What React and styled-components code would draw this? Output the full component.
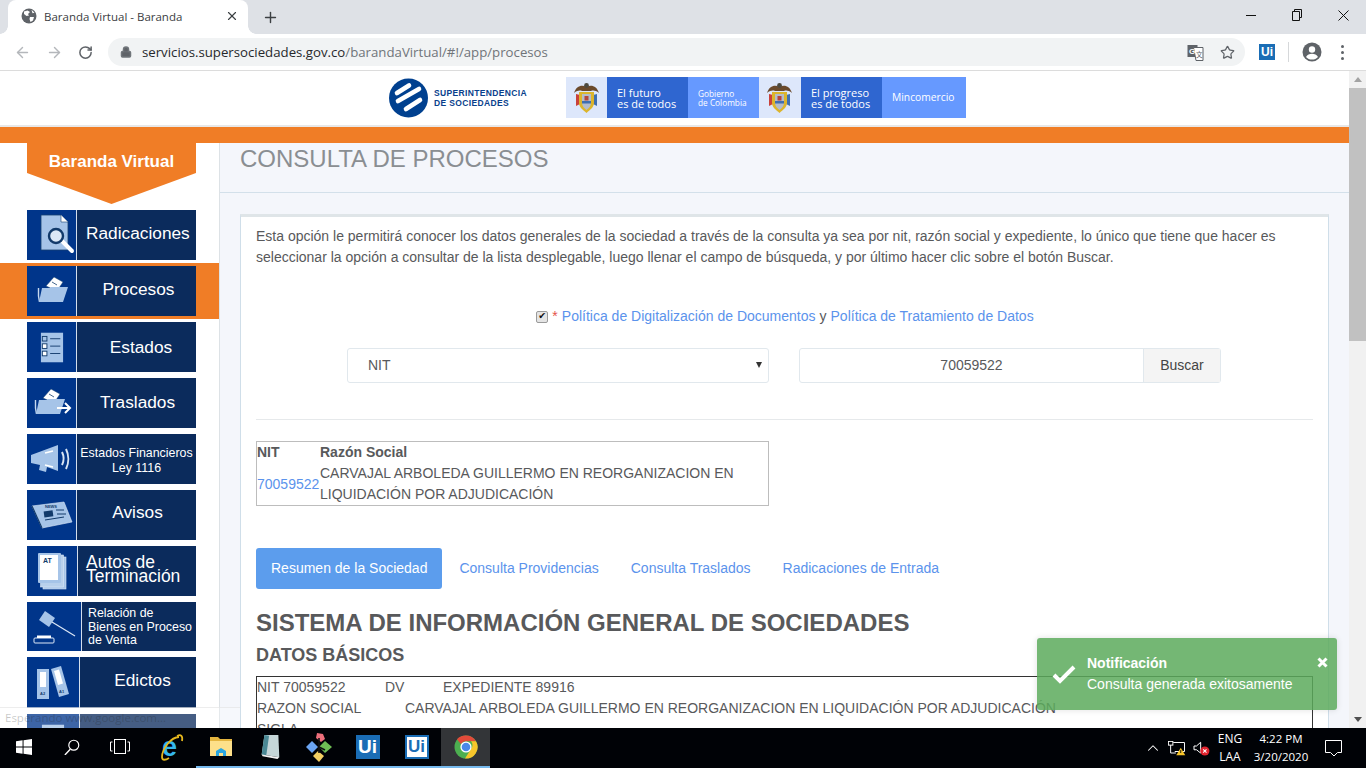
import React from "react";
import styled, { createGlobalStyle } from "styled-components";
import { ArrowLeft, ArrowRight, RotateCw, Lock, Star, X, Plus, ChevronUp } from "lucide-react";

const GlobalStyle = createGlobalStyle`
  html, body {
    margin: 0;
    padding: 0;
    width: 1366px;
    height: 768px;
    overflow: hidden;
    background: #fff;
  }
  * { box-sizing: border-box; }
`;

const Screen = styled.div`
  position: relative;
  width: 1366px;
  height: 768px;
  display: flex;
  flex-direction: column;
  overflow: hidden;
  font-family: "Liberation Sans", Arial, sans-serif;
`;

// ================ Browser chrome ===================
const TabStrip = styled.div`
  height: 34px;
  flex: none;
  background: #dee1e6;
  display: flex;
  align-items: stretch;
  padding-left: 8px;
`;

const Tab = styled.div`
  position: relative;
  width: 240px;
  background: #fff;
  border-radius: 8px 8px 0 0;
  display: flex;
  align-items: center;
  padding: 0 9px 2px 13px;
  color: #3c4043;
  font-family: "Open Sans", sans-serif;
  font-size: 11.5px;
  &::before, &::after {
    content: "";
    position: absolute;
    bottom: 0;
    width: 8px;
    height: 8px;
  }
  &::before {
    left: -8px;
    background: radial-gradient(circle at 0 0, #dee1e6 7.5px, #fff 8px);
  }
  &::after {
    right: -8px;
    background: radial-gradient(circle at 100% 0, #dee1e6 7.5px, #fff 8px);
  }
`;

const TabTitle = styled.span`
  flex: 1;
  margin-left: 7px;
  white-space: nowrap;
`;

const NewTab = styled.div`
  margin-left: 14px;
  display: flex;
  align-items: center;
  color: #3c4043;
`;

const WindowControls = styled.div`
  margin-left: auto;
  display: flex;
  align-items: stretch;
`;

const WindowButton = styled.div`
  width: 46px;
  display: flex;
  align-items: center;
  justify-content: center;
  padding-bottom: 4px;
`;

const Toolbar = styled.div`
  height: 37px;
  flex: none;
  background: #fff;
  border-bottom: 1px solid #dcdcdc;
  display: flex;
  align-items: center;
  padding: 0 0 0 14px;
`;

const NavButton = styled.div`
  width: 32px;
  display: flex;
  align-items: center;
  color: ${(props) => (props.$off ? "#b4b7bb" : "#5f6368")};
`;

const Omnibox = styled.div`
  width: 1137px;
  height: 28px;
  margin-left: -2px;
  border-radius: 14px;
  background: #f1f3f4;
  display: flex;
  align-items: center;
  padding: 0 10px 0 12px;
  font-family: "Open Sans", sans-serif;
  font-size: 13.23px;
  color: #70757a;
  white-space: nowrap;
`;

const UrlHost = styled.span`
  margin-left: 10px;
  color: #26282b;
`;

const OmniIcons = styled.div`
  margin-left: auto;
  display: flex;
  align-items: center;
  gap: 16px;
  color: #5f6368;
`;

const ToolIcons = styled.div`
  display: flex;
  align-items: center;
  margin-left: 14px;
`;

const UiBadge = styled.div`
  width: ${(props) => props.$size}px;
  height: ${(props) => props.$size}px;
  display: flex;
  align-items: center;
  justify-content: center;
  font-family: "Liberation Sans", sans-serif;
  font-weight: 700;
  background: ${(props) => (props.$light ? "#fff" : "#1a6db5")};
  color: ${(props) => (props.$light ? "#1a6db5" : "#fff")};
  border: ${(props) => (props.$light ? "2px solid #1a6db5" : "none")};
  font-size: ${(props) => props.$font}px;
`;

const ToolDivider = styled.div`
  width: 1px;
  height: 20px;
  margin: 0 13px;
  background: #d6d8da;
`;

const Kebab = styled.div`
  margin-left: 19px;
  display: flex;
  flex-direction: column;
  gap: 3px;
  i {
    display: block;
    width: 3px;
    height: 3px;
    border-radius: 50%;
    background: #5f6368;
  }
`;

// ================ Viewport ===================
const Viewport = styled.div`
  flex: 1;
  min-height: 0;
  display: flex;
`;

const Page = styled.div`
  flex: 1;
  min-width: 0;
  display: flex;
  flex-direction: column;
  overflow: hidden;
`;

const Scrollbar = styled.div`
  width: 17px;
  flex: none;
  background: #f1f1f1;
  display: flex;
  flex-direction: column;
  align-items: center;
`;

const ScrollArrow = styled.div`
  width: 0;
  height: 0;
  flex: none;
  margin: 6px 0;
  border-left: 4px solid transparent;
  border-right: 4px solid transparent;
  ${(props) =>
    props.$down
      ? "border-top: 5px solid #505050; margin-top: auto;"
      : "border-bottom: 5px solid #a3a3a3;"}
`;

const ScrollThumb = styled.div`
  width: 100%;
  height: 253px;
  background: #c1c1c1;
`;

const Header = styled.header`
  height: 56px;
  flex: none;
  background: #fff;
  border-bottom: 2px solid #e8e8e8;
  display: flex;
  align-items: center;
  padding: 0 0 0 389px;
`;

const Logo = styled.div`
  display: flex;
  align-items: center;
  width: 177px;
  margin-top: -1px;
`;

const LogoText = styled.div`
  margin-left: 5px;
  color: #0a3f8c;
  font-size: 8.5px;
  font-weight: 700;
  line-height: 10px;
  letter-spacing: 0.35px;
`;

const Banner = styled.div`
  display: flex;
  height: 41px;
  margin-top: -1px;
`;

const BannerCell = styled.div`
  width: ${(props) => props.$w}px;
  background: ${(props) => props.$bg};
  color: #fff;
  font-size: ${(props) => props.$font || 11}px;
  line-height: ${(props) => props.$line || 11}px;
  display: flex;
  align-items: center;
  padding-left: ${(props) => props.$pad || 0}px;
  font-family: "Open Sans", sans-serif;
  font-weight: 500;
`;

const OrangeBar = styled.div`
  height: 16px;
  flex: none;
  background: #f07d26;
`;

const Body = styled.div`
  flex: 1;
  min-height: 0;
  display: flex;
  overflow: hidden;
`;

// ================ Sidebar ===================
const Sidebar = styled.aside`
  width: 220px;
  flex: none;
  background: #fff;
  border-right: 1px solid #dde2e6;
  overflow: hidden;
`;

const Flag = styled.div`
  width: 169px;
  height: 61px;
  margin-left: 27px;
  background: #f07d26;
  clip-path: polygon(0 0, 100% 0, 100% 49%, 50% 100%, 0 49%);
  color: #fff;
  font-size: 17px;
  font-weight: 700;
  text-align: center;
  padding-top: 9px;
`;

const MenuList = styled.nav`
  margin-top: 6px;
  display: flex;
  flex-direction: column;
  gap: 6px;
`;

const MenuRow = styled.div`
  flex: none;
  padding: ${(props) => (props.$active ? "3px 0 3px 27px" : "0 0 0 27px")};
  margin: ${(props) => (props.$active ? "-3px 0" : "0")};
  background: ${(props) => (props.$active ? "#f07d26" : "transparent")};
`;

const MenuItem = styled.div`
  width: 169px;
  height: ${(props) => props.$h || 50}px;
  display: flex;
  background: #0b2b5c;
  color: #fff;
`;

const MenuIcon = styled.div`
  width: ${(props) => props.$w || 50}px;
  flex: none;
  background: #00358a;
  border-right: 1px solid #d3deec;
  display: flex;
  align-items: center;
  justify-content: center;
`;

const MenuLabel = styled.div`
  flex: 1;
  display: flex;
  align-items: center;
  justify-content: ${(props) => (props.$left ? "flex-start" : "center")};
  padding-left: ${(props) => props.$shift || 0}px;
  padding-top: ${(props) => props.$drop || 0}px;
  padding-bottom: ${(props) => props.$lift ?? 3}px;
  font-size: ${(props) => props.$font || 17.3}px;
  line-height: ${(props) => props.$line || "20px"};
  text-align: ${(props) => (props.$left ? "left" : "center")};
`;

// ================ Main ===================
const Main = styled.main`
  flex: 1;
  min-width: 0;
  background: #f4f6fb;
  overflow: hidden;
`;

const PageHead = styled.div`
  height: 50px;
  padding: 3px 0 0 20px;
  border-bottom: 1px solid #d3e0ea;
`;

const PageTitle = styled.h2`
  margin: 0;
  font-size: 24px;
  line-height: 26px;
  font-weight: 400;
  color: #8a8e92;
`;

const Content = styled.div`
  padding: 21px 20px 0;
`;

const Card = styled.section`
  height: 600px;
  background: #fff;
  border: 1px solid #cfdee9;
  border-top: 3px solid #dfe5e8;
  padding: 9px 15px 0;
  color: #58595b;
  font-size: 14px;
  line-height: 21px;
`;

const Intro = styled.p`
  margin: 0;
  width: 1040px;
`;

const PolicyRow = styled.div`
  margin-top: 38px;
  display: flex;
  justify-content: center;
  align-items: center;
  height: 21px;
`;

const PolicyCheck = styled.input`
  appearance: none;
  position: relative;
  margin: 0 4px 0 1px;
  width: 12px;
  height: 12px;
  background: #e4e4e4;
  border: 1px solid #9a9a9a;
  border-radius: 2px;
  &::after {
    content: "✔";
    position: absolute;
    left: 1px;
    top: -2px;
    line-height: 12px;
    font-family: "DejaVu Sans", sans-serif;
    font-size: 9.5px;
    color: #111;
  }
`;

const Required = styled.span`
  color: #e5534b;
  margin-right: 4px;
`;

const Link = styled.a`
  color: #5b93ec;
`;

const PolicyGlue = styled.span`
  margin: 0 4px;
`;

const FormRow = styled.div`
  margin-top: 21px;
  padding-right: 1px;
  display: flex;
  justify-content: center;
  gap: 30px;
`;

const SelectBox = styled.div`
  width: 422px;
  height: 35px;
  border: 1px solid #e1e8ed;
  border-radius: 3px;
  display: flex;
  align-items: center;
  justify-content: space-between;
  padding: 0 6px 0 20px;
  color: #58595b;
`;

const Caret = styled.span`
  width: 0;
  height: 0;
  margin-top: -2px;
  border-left: 3px solid transparent;
  border-right: 3px solid transparent;
  border-top: 6px solid #333;
`;

const SearchGroup = styled.div`
  width: 422px;
  height: 35px;
  display: flex;
  border: 1px solid #e1e8ed;
  border-radius: 3px;
`;

const SearchValue = styled.div`
  flex: 1;
  display: flex;
  align-items: center;
  justify-content: center;
  color: #58595b;
`;

const SearchButton = styled.div`
  width: 77px;
  flex: none;
  background: #f4f4f4;
  border-left: 1px solid #e1e8ed;
  display: flex;
  align-items: center;
  justify-content: center;
  color: #444;
`;

const Hr = styled.hr`
  margin: 36px 0 21px;
  border: none;
  height: 1px;
  background: #e6e9eb;
`;

const ResultTable = styled.table`
  width: 513px;
  border: 1px solid #bdbdbd;
  border-spacing: 0;
  th, td {
    padding: 0;
    text-align: left;
    font-size: 14px;
    line-height: 21px;
  }
  th { font-weight: 700; }
  th:first-child, td:first-child { width: 63px; }
  td { vertical-align: middle; }
`;

const Tabs = styled.div`
  margin-top: 42px;
  display: flex;
  align-items: center;
`;

const TabButton = styled.div`
  height: 41px;
  padding: 0 ${(props) => (props.$active ? "15px" : "16px")};
  display: flex;
  align-items: center;
  border-radius: 3px;
  margin-right: ${(props) => (props.$active ? "1px" : "0")};
  background: ${(props) => (props.$active ? "#5c9ded" : "transparent")};
  color: ${(props) => (props.$active ? "#fff" : "#5b93ec")};
`;

const BigTitle = styled.h1`
  margin: 21px 0 0;
  font-size: 24px;
  line-height: 26px;
  font-weight: 700;
  color: #58595b;
`;

const SubTitle = styled.h3`
  margin: 8px 0 0;
  font-size: 18px;
  line-height: 22px;
  font-weight: 700;
  color: #58595b;
`;

const DataTable = styled.div`
  margin-top: 10px;
  width: 1057px;
  border: 1px solid #333;
  border-bottom: none;
`;

const DataRow = styled.div`
  display: flex;
  height: 21px;
  white-space: nowrap;
`;

const DataCell = styled.div`
  width: ${(props) => (props.$w ? `${props.$w}px` : "auto")};
  flex: none;
`;

// ================ Overlays ===================
const StatusBubble = styled.div`
  position: absolute;
  left: 0;
  bottom: 40px;
  width: 240px;
  height: 21px;
  padding: 1px 0 0 5px;
  background: rgba(255, 255, 255, 0.24);
  border-top: 1px solid rgba(225, 225, 225, 0.6);
  color: rgba(30, 30, 30, 0.25);
  font-family: "Open Sans", sans-serif;
  font-size: 11.5px;
  line-height: 18px;
`;

const Toast = styled.div`
  position: absolute;
  left: 1037px;
  top: 638px;
  width: 300px;
  height: 72px;
  border-radius: 3px;
  background: rgba(92, 170, 92, 0.85);
  color: #fff;
  display: flex;
  align-items: center;
  padding: 0 0 0 15px;
  box-shadow: 0 0 6px rgba(0, 0, 0, 0.12);
  font-size: 14px;
  line-height: 21px;
`;

const ToastText = styled.div`
  margin-left: 11px;
  flex: 1;
`;

const ToastTitle = styled.div`
  font-weight: 700;
`;

const ToastClose = styled.div`
  position: absolute;
  right: 9px;
  top: 19px;
  display: flex;
`;

// ================ Taskbar ===================
const Taskbar = styled.footer`
  height: 40px;
  flex: none;
  background: #000206;
  display: flex;
  align-items: stretch;
  color: #fff;
  font-family: "Open Sans", sans-serif;
  font-size: 12px;
`;

const TaskSlot = styled.div`
  width: ${(props) => props.$w || 49}px;
  flex: none;
  margin-left: ${(props) => props.$gap || 0}px;
  display: flex;
  align-items: center;
  justify-content: center;
  padding-bottom: 1px;
  background: ${(props) => (props.$active ? "#333538" : "transparent")};
  border-bottom: ${(props) =>
    props.$open ? "2px solid #76b9ed" : "2px solid transparent"};
`;

const Tray = styled.div`
  margin-left: auto;
  display: flex;
  align-items: center;
  padding-right: 15px;
`;

const TrayIcon = styled.div`
  width: ${(props) => props.$w}px;
  display: flex;
  justify-content: center;
`;

const TrayText = styled.div`
  width: ${(props) => props.$w}px;
  font-size: ${(props) => props.$font || 12}px;
  text-align: center;
  line-height: 18px;
  white-space: nowrap;
`;

const GlobeIcon = () => (
  <svg width="16" height="16" viewBox="0 0 16 16">
    <circle cx="8" cy="8" r="7.5" fill="#5f6368" />
    <path d="M3 3.5 6.5 2.5 9 4 7 6 8 7.5 5.5 8 3 6Z M9 9h4l-1 3.5L9.5 14 8.5 11Z M10.5 1.8l3 3-2 .5Z" fill="#fff" />
  </svg>
);

const TranslateIcon = () => (
  <svg width="17" height="17" viewBox="0 0 17 17">
    <rect x="0.5" y="1" width="10" height="12" fill="#5f6368" />
    <path d="M6.5 3.5h9.5v13h-7z" fill="#fff" stroke="#5f6368" />
    <text x="2" y="10" fontFamily="Liberation Sans" fontSize="8" fontWeight="700" fill="#fff">G</text>
    <text x="9" y="13" fontFamily="Noto Sans CJK SC" fontSize="6.5" fill="#5f6368">文</text>
  </svg>
);

const AvatarIcon = () => (
  <svg width="20" height="20" viewBox="0 0 20 20">
    <circle cx="10" cy="10" r="9.5" fill="#5f6368" />
    <circle cx="10" cy="7.5" r="3.2" fill="#fff" />
    <path d="M4 15c1.2-2.4 3.5-3.3 6-3.3s4.8.9 6 3.3c-1.4 1.7-3.6 2.6-6 2.6s-4.6-.9-6-2.6z" fill="#fff" />
  </svg>
);

const SocietyLogo = () => (
  <svg width="40" height="40" viewBox="0 0 40 40">
    <circle cx="19.5" cy="20" r="19.5" fill="#00408f" />
    <g stroke="#fff" strokeWidth="4.6" strokeLinecap="round">
      <line x1="8" y1="15" x2="20" y2="7.5" />
      <line x1="9" y1="23" x2="30" y2="11" />
      <line x1="17" y1="31" x2="31" y2="22" />
    </g>
  </svg>
);

const Crest = () => (
  <svg width="27" height="32" viewBox="0 0 27 32">
    <path d="M1 11C3 4 9 2 13.5 5 18 2 24 4 26 11c-3-2.5-6-3-8-2H9C7 8 4 8.5 1 11z" fill="#6b4a2c" />
    <circle cx="13.5" cy="3.5" r="2.4" fill="#4d4a40" />
    <path d="M3 12l4 1v9l-4 2z" fill="#c9413a" />
    <path d="M24 12l-4 1v9l4 2z" fill="#3f6fb0" />
    <path d="M6 10h15v11c0 4-4 7-7.5 10C10 28 6 25 6 21z" fill="#dcb52c" />
    <path d="M9 12h9v9c0 3-2 5-4.5 7C11 26 9 24 9 21z" fill="#b4bccb" />
    <rect x="11.5" y="14" width="4" height="4.5" fill="#b5453c" />
    <path d="M9 19h9v2.5H9z" fill="#3f6fb0" />
  </svg>
);

const FileSearchIcon = () => (
  <svg width="46" height="42" viewBox="-6 0 46 42">
    <path d="M6 1h20l7 7v28H6z" fill="#a6c4e8" stroke="#15406f" strokeWidth="0.8" />
    <path d="M26 1v7h7" fill="#fff" stroke="#15406f" strokeWidth="0.6" />
    <line x1="27" y1="27" x2="37" y2="37" stroke="#fff" strokeWidth="4" strokeLinecap="round" />
    <circle cx="21" cy="22" r="7" fill="#dce8f6" stroke="#123a6a" strokeWidth="2.4" />
  </svg>
);

const FolderIcon = ({ arrow }) => (
  <svg width={arrow ? 40 : 34} height="30" viewBox={`0 0 ${arrow ? 40 : 34} 30`}>
    <path d="M11 10 19 1l9 5-6 9z" fill="#fff" stroke="#15406f" strokeWidth="0.5" />
    <line x1="17" y1="6" x2="22" y2="9" stroke="#15406f" strokeWidth="0.8" />
    <path d="M3.5 12v8l1 6" fill="none" stroke="#c6d8ee" strokeWidth="1.4" />
    <path d="M7 12h8l1-1h17l-5 15H4z" fill="#a6c4e8" />
    {arrow && <path d="M25 20h13M33 15l5 5-5 5" fill="none" stroke="#fff" strokeWidth="2" />}
  </svg>
);

const ChecklistIcon = () => (
  <svg width="24" height="33" viewBox="0 0 26 34">
    <rect x="1" y="1" width="24" height="32" fill="#a6c4e8" />
    {[5, 13, 21].map((y) => (
      <g key={y}>
        <rect x="2.5" y={y} width="5" height="5" fill={y === 5 ? "#a6c4e8" : "#fff"} stroke="#123a6a" />
        <line x1="11" y1={y + 2.5} x2="22" y2={y + 2.5} stroke="#123a6a" strokeWidth="1" />
      </g>
    ))}
  </svg>
);

const MegaphoneIcon = () => (
  <svg width="44" height="30" viewBox="0 0 44 30">
    <path d="M1 11 28 1v26L17 23l-1 5-7-2 1-5-9-2z" fill="#a6c4e8" />
    <path d="M15 9l8-2M15 21l8 2" stroke="#fff" strokeWidth="1.5" />
    <path d="M32 8c2 4 2 9 0 13M36 5c3 6 3 14 0 20" fill="none" stroke="#d8e5f4" strokeWidth="2" />
  </svg>
);

const NewsIcon = () => (
  <svg width="42" height="28" viewBox="0 0 42 28">
    <path d="M1 5 33 1l8 20-30 6z" fill="#a6c4e8" stroke="#dce8f6" strokeWidth="0.6" />
    <path d="M1 5l10 22" stroke="#123a6a" strokeWidth="1.2" />
    <rect x="13" y="10" width="9" height="6" fill="#123a6a" transform="rotate(-8 17 13)" />
    <path d="M25 9h8M26 13h9M14 19l19-3" stroke="#123a6a" strokeWidth="1" />
    <text x="14" y="7" fontFamily="Liberation Sans" fontSize="4" fontWeight="700" fill="#123a6a">NEWS</text>
  </svg>
);

const DocsStackIcon = () => (
  <svg width="30" height="38" viewBox="0 0 30 38">
    <rect x="6" y="5" width="23" height="32" fill="#a6c4e8" stroke="#dce8f6" strokeWidth="0.6" />
    <rect x="3.5" y="3" width="23" height="32" fill="#b8d0ec" stroke="#dce8f6" strokeWidth="0.6" />
    <rect x="1" y="1" width="23" height="30" rx="1" fill="#a6c4e8" />
    <rect x="3" y="3" width="18" height="25" fill="#fff" />
    <text x="6" y="11" fontFamily="Liberation Sans" fontSize="7" fontWeight="700" fill="#123a6a">AT</text>
  </svg>
);

const GavelIcon = () => (
  <svg width="46" height="34" viewBox="0 0 46 34">
    <path d="M14 1l10 7-6 9-10-7z" fill="#a6c4e8" />
    <line x1="21" y1="12" x2="44" y2="26" stroke="#dce8f6" strokeWidth="1.2" />
    <rect x="3" y="28" width="20" height="5" rx="1" fill="none" stroke="#dce8f6" strokeWidth="1" />
    <rect x="6" y="25.5" width="14" height="2.5" fill="#fff" />
  </svg>
);

const BindersIcon = () => (
  <svg width="34" height="34" viewBox="0 0 34 34">
    <rect x="1" y="3" width="12" height="30" fill="#a6c4e8" />
    <rect x="4" y="6" width="6" height="15" fill="#fff" />
    <path d="M15 3l10-3 8 28-10 3z" fill="#a6c4e8" />
    <path d="M18 5l5-1.5 4 14-5 1.5z" fill="#fff" />
    <text x="4" y="29" fontFamily="Liberation Sans" fontSize="4" fontWeight="700" fill="#123a6a">A2</text>
    <text x="23" y="27" fontFamily="Liberation Sans" fontSize="4" fontWeight="700" fill="#123a6a">A1</text>
  </svg>
);

const WindowsLogo = () => (
  <svg width="16" height="16" viewBox="0 0 17 17">
    <path d="M0 2.4 7 1.4V8H0zM8 1.2 17 0v8H8zM0 9h7v6.6l-7-1zM8 9h9v8l-9-1.2z" fill="#fff" />
  </svg>
);

const SearchLogo = () => (
  <svg width="16" height="16" viewBox="0 0 18 18">
    <circle cx="11" cy="7" r="5.6" fill="none" stroke="#fff" strokeWidth="1.3" />
    <line x1="7" y1="11.5" x2="1" y2="18" stroke="#fff" strokeWidth="1.5" />
  </svg>
);

const TaskViewLogo = () => (
  <svg width="20" height="15" viewBox="0 0 20 15">
    <rect x="4.5" y="0.5" width="11" height="14" fill="none" stroke="#fff" />
    <path d="M2.5 3H.5v9h2M17.5 3h2v9h-2" fill="none" stroke="#fff" />
  </svg>
);

const IeLogo = () => (
  <svg width="26" height="32" viewBox="0 0 26 32">
    <text x="3" y="25" fontFamily="Liberation Sans" fontSize="27" fontWeight="700" fill="#35b7ec">e</text>
    <path d="M20 6C12 6 3 18 3 26c0 4 4 3 7 1M18 5c4-2 6 0 5 5" fill="none" stroke="#e5b71e" strokeWidth="1.8" />
  </svg>
);

const FolderLogo = () => (
  <svg width="22" height="19" viewBox="0 0 22 19">
    <path d="M0 0h8l2 2h12v4H0z" fill="#e4b53f" />
    <rect y="4" width="22" height="15" fill="#fde08a" />
    <path d="M6 19v-5l5-3 5 3v5h-3v-3H9v3z" fill="#2aa6e0" />
  </svg>
);

const NotesLogo = () => (
  <svg width="22" height="26" viewBox="0 0 22 28">
    <path d="M5 1h15l1 24-19-3z" fill="#c5d6d8" />
    <path d="M2 22 5 1l5 1-3 21z" fill="#4a8894" />
    <path d="M2 22l19 3-2 2-16-3z" fill="#f3f3f3" />
  </svg>
);

const DiamondsLogo = () => (
  <svg width="26" height="30" viewBox="0 0 26 30">
    <path d="M11 1l6 1 2 5-4 3-5-4z" fill="#ec6f7b" />
    <path d="M6 9l6 6-6 6-6-6z" fill="#6aa4f2" />
    <path d="M19 9l7 6-7 6-6-6z" fill="#6fbe54" />
    <path d="M12 19l6 5-5 6-6-6z" fill="#f3cf63" />
    <path d="M13 6v15M13 15l6 3" stroke="#111" strokeWidth="1.6" />
  </svg>
);

const ChromeLogo = () => (
  <svg width="24" height="24" viewBox="0 0 24 24">
    <circle cx="12" cy="12" r="11.5" fill="#4caf50" />
    <path d="M12 .5A11.5 11.5 0 0 1 22 6.2H12a5.8 5.8 0 0 0-5 3L3 4.2A11.5 11.5 0 0 1 12 .5z" fill="#e24a3a" />
    <path d="M22 6.2A11.5 11.5 0 0 1 11 23.5L17 14a5.8 5.8 0 0 0 0-7.8z" fill="#f7c52b" />
    <circle cx="12" cy="12" r="5.6" fill="#fff" />
    <circle cx="12" cy="12" r="4.3" fill="#4a88e8" />
  </svg>
);

const NetworkIcon = () => (
  <svg width="18" height="15" viewBox="0 0 24 20">
    <path d="M7 2h15v12H9" fill="none" stroke="#fff" strokeWidth="1.3" />
    <rect x="0.5" y="0.5" width="6" height="5" fill="none" stroke="#fff" strokeWidth="1.3" />
    <path d="M3.5 5.5V16h7" fill="none" stroke="#fff" strokeWidth="1.3" />
    <path d="M17 9l6 10H11z" fill="#f7c52b" />
    <rect x="16.4" y="12" width="1.2" height="4" fill="#111" />
  </svg>
);

const VolumeIcon = () => (
  <svg width="17" height="15" viewBox="0 0 20 18">
    <path d="M1 6h3l5-4.5v13L4 10.5H1z" fill="none" stroke="#fff" strokeWidth="1.2" />
    <circle cx="14" cy="12" r="5.5" fill="#e0232e" />
    <path d="M12 10l4 4M16 10l-4 4" stroke="#fff" strokeWidth="1.3" />
  </svg>
);

const ChatIcon = () => (
  <svg width="17" height="17" viewBox="0 0 17 17">
    <path d="M.5.5h16v12h-4l-3.5 3.5-3.5-3.5h-5z" fill="none" stroke="#fff" />
  </svg>
);

const menu = [
  { label: "Radicaciones", icon: <FileSearchIcon />, left: true, shift: 9, lift: 5 },
  { label: "Procesos", icon: <FolderIcon />, active: true, lift: 5, shift: 4 },
  { label: "Estados", icon: <ChecklistIcon />, shift: 9, lift: 0 },
  { label: "Traslados", icon: <FolderIcon arrow />, lift: 2, shift: 2 },
  { label: ["Estados Financieros", <br key="b" />, "Ley 1116"], icon: <MegaphoneIcon />, font: 12.4, line: "15px", lift: 0, drop: 4 },
  { label: "Avisos", icon: <NewsIcon />, iconW: 50, lift: 7, shift: 2 },
  { label: ["Autos de", <br key="b" />, "Terminación"], icon: <DocsStackIcon />, iconW: 51, left: true, shift: 8, line: "14px", font: 17.5, lift: 5 },
  { label: ["Relación de", <br key="b" />, "Bienes en Proceso", <br key="c" />, "de Venta"], icon: <GavelIcon />, iconW: 55, left: true, shift: 6, font: 12.4, line: "13.7px", h: 49, lift: 0, drop: 2 },
  { label: "Edictos", icon: <BindersIcon />, iconW: 53, shift: 9, h: 51, lift: 5 },
  { label: "", icon: <ChecklistIcon />, iconW: 53 },
];

const App = () => {
  return (
    <Screen>
      <GlobalStyle />
      <TabStrip>
        <Tab>
          <GlobeIcon />
          <TabTitle>Baranda Virtual - Baranda</TabTitle>
          <X size={14} strokeWidth={2} />
        </Tab>
        <NewTab>
          <Plus size={17} strokeWidth={2} />
        </NewTab>
        <WindowControls>
          <WindowButton>
            <svg width="10" height="10" viewBox="0 0 10 10"><line x1="0" y1="5.5" x2="10" y2="5.5" stroke="#111" /></svg>
          </WindowButton>
          <WindowButton>
            <svg width="10" height="12" viewBox="0 0 10 12"><path d="M2.5 2.5V.5h7v8h-2M.5 2.5h7v9h-7z" fill="none" stroke="#111" /></svg>
          </WindowButton>
          <WindowButton>
            <svg width="11" height="11" viewBox="0 0 11 11"><path d="M.5.5l10 10M10.5.5l-10 10" stroke="#111" /></svg>
          </WindowButton>
        </WindowControls>
      </TabStrip>
      <Toolbar>
        <NavButton $off><ArrowLeft size={17} strokeWidth={2} /></NavButton>
        <NavButton $off><ArrowRight size={17} strokeWidth={2} /></NavButton>
        <NavButton><RotateCw size={15} strokeWidth={2.4} /></NavButton>
        <Omnibox>
          <Lock size={12} strokeWidth={3} fill="#5f6368" />
          <UrlHost>servicios.supersociedades.gov.co</UrlHost>/barandaVirtual/#!/app/procesos
          <OmniIcons>
            <TranslateIcon />
            <Star size={15} strokeWidth={2} />
          </OmniIcons>
        </Omnibox>
        <ToolIcons>
          <UiBadge $size={16} $font={12}>Ui</UiBadge>
          <ToolDivider />
          <AvatarIcon />
          <Kebab><i /><i /><i /></Kebab>
        </ToolIcons>
      </Toolbar>
      <Viewport>
        <Page>
          <Header>
            <Logo>
              <SocietyLogo />
              <LogoText>SUPERINTENDENCIA<br />DE SOCIEDADES</LogoText>
            </Logo>
            <Banner>
              <BannerCell $w={41} $bg="#dde7fb" $pad={7}><Crest /></BannerCell>
              <BannerCell $w={81} $bg="#2f66d0" $pad={10}>El futuro<br />es de todos</BannerCell>
              <BannerCell $w={71} $bg="#6699ff" $pad={10} $font={8.3} $line={9}>Gobierno<br />de Colombia</BannerCell>
              <BannerCell $w={42} $bg="#dde7fb" $pad={7}><Crest /></BannerCell>
              <BannerCell $w={81} $bg="#2f66d0" $pad={10}>El progreso<br />es de todos</BannerCell>
              <BannerCell $w={84} $bg="#6699ff" $pad={10} $font={10.3}>Mincomercio</BannerCell>
            </Banner>
          </Header>
          <OrangeBar />
          <Body>
            <Sidebar>
              <Flag>Baranda Virtual</Flag>
              <MenuList>
                {menu.map((item, index) => (
                  <MenuRow key={index} $active={item.active}>
                    <MenuItem $h={item.h}>
                      <MenuIcon $w={item.iconW}>{item.icon}</MenuIcon>
                      <MenuLabel $left={item.left} $shift={item.shift} $font={item.font} $line={item.line} $lift={item.lift} $drop={item.drop}>
                        <span>{item.label}</span>
                      </MenuLabel>
                    </MenuItem>
                  </MenuRow>
                ))}
              </MenuList>
            </Sidebar>
            <Main>
              <PageHead>
                <PageTitle>CONSULTA DE PROCESOS</PageTitle>
              </PageHead>
              <Content>
                <Card>
                  <Intro>
                    Esta opción le permitirá conocer los datos generales de la sociedad a través de la consulta ya sea por nit, razón social y expediente, lo único que tiene que hacer es seleccionar la opción a consultar de la lista desplegable, luego llenar el campo de búsqueda, y por último hacer clic sobre el botón Buscar.
                  </Intro>
                  <PolicyRow>
                    <PolicyCheck type="checkbox" defaultChecked />
                    <Required>*</Required>
                    <Link>Política de Digitalización de Documentos</Link>
                    <PolicyGlue>y</PolicyGlue>
                    <Link>Política de Tratamiento de Datos</Link>
                  </PolicyRow>
                  <FormRow>
                    <SelectBox>NIT<Caret /></SelectBox>
                    <SearchGroup>
                      <SearchValue>70059522</SearchValue>
                      <SearchButton>Buscar</SearchButton>
                    </SearchGroup>
                  </FormRow>
                  <Hr />
                  <ResultTable>
                    <thead>
                      <tr><th>NIT</th><th>Razón Social</th></tr>
                    </thead>
                    <tbody>
                      <tr>
                        <td><Link>70059522</Link></td>
                        <td>CARVAJAL ARBOLEDA GUILLERMO EN REORGANIZACION EN LIQUIDACIÓN POR ADJUDICACIÓN</td>
                      </tr>
                    </tbody>
                  </ResultTable>
                  <Tabs>
                    <TabButton $active>Resumen de la Sociedad</TabButton>
                    <TabButton>Consulta Providencias</TabButton>
                    <TabButton>Consulta Traslados</TabButton>
                    <TabButton>Radicaciones de Entrada</TabButton>
                  </Tabs>
                  <BigTitle>SISTEMA DE INFORMACIÓN GENERAL DE SOCIEDADES</BigTitle>
                  <SubTitle>DATOS BÁSICOS</SubTitle>
                  <DataTable>
                    <DataRow>
                      <DataCell $w={128}>NIT 70059522</DataCell>
                      <DataCell $w={58}>DV</DataCell>
                      <DataCell>EXPEDIENTE 89916</DataCell>
                    </DataRow>
                    <DataRow>
                      <DataCell $w={148}>RAZON SOCIAL</DataCell>
                      <DataCell>CARVAJAL ARBOLEDA GUILLERMO EN REORGANIZACION EN LIQUIDACIÓN POR ADJUDICACIÓN</DataCell>
                    </DataRow>
                    <DataRow>
                      <DataCell>SIGLA</DataCell>
                    </DataRow>
                  </DataTable>
                </Card>
              </Content>
            </Main>
          </Body>
        </Page>
        <Scrollbar>
          <ScrollArrow />
          <ScrollThumb />
          <ScrollArrow $down />
        </Scrollbar>
      </Viewport>
      <Taskbar>
        <TaskSlot $w={48}><WindowsLogo /></TaskSlot>
        <TaskSlot $w={48}><SearchLogo /></TaskSlot>
        <TaskSlot $w={48}><TaskViewLogo /></TaskSlot>
        <TaskSlot $gap={3}><IeLogo /></TaskSlot>
        <TaskSlot $open><FolderLogo /></TaskSlot>
        <TaskSlot $open><NotesLogo /></TaskSlot>
        <TaskSlot $open><DiamondsLogo /></TaskSlot>
        <TaskSlot $open><UiBadge $size={24} $font={19}>Ui</UiBadge></TaskSlot>
        <TaskSlot $open><UiBadge $size={24} $font={17} $light>Ui</UiBadge></TaskSlot>
        <TaskSlot $open $active><ChromeLogo /></TaskSlot>
        <Tray>
          <TrayIcon $w={24}><ChevronUp size={18} strokeWidth={1.4} /></TrayIcon>
          <TrayIcon $w={24}><NetworkIcon /></TrayIcon>
          <TrayIcon $w={24}><VolumeIcon /></TrayIcon>
          <TrayText $w={34}>ENG<br />LAA</TrayText>
          <TrayText $w={68} $font={11.5}>4:22 PM<br />3/20/2020</TrayText>
          <TrayIcon $w={36}><ChatIcon /></TrayIcon>
        </Tray>
      </Taskbar>
      <StatusBubble>Esperando www.google.com...</StatusBubble>
      <Toast>
        <svg width="24" height="20" viewBox="0 0 24 20">
          <path d="M2 11l6 6L22 3" fill="none" stroke="#fff" strokeWidth="4" />
        </svg>
        <ToastText>
          <ToastTitle>Notificación</ToastTitle>
          Consulta generada exitosamente
        </ToastText>
        <ToastClose>
          <svg width="11" height="11" viewBox="0 0 11 11">
            <path d="M1.5 1.5l8 8M9.5 1.5l-8 8" stroke="#fff" strokeWidth="3" />
          </svg>
        </ToastClose>
      </Toast>
    </Screen>
  );
};

export default App;
